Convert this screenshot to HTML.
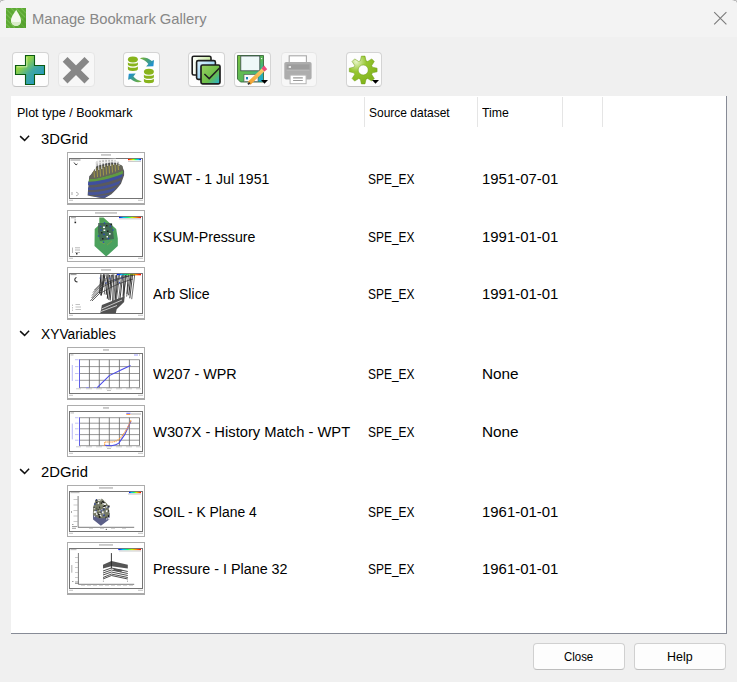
<!DOCTYPE html>
<html><head><meta charset="utf-8">
<style>
html,body{margin:0;padding:0}
body{width:737px;height:682px;background:#f0f0f0;position:relative;overflow:hidden;font-family:"Liberation Sans",sans-serif;color:#000}
.a{position:absolute}
.t{position:absolute;white-space:pre;transform-origin:0 0;line-height:15px;font-size:15.5px;color:#000}
.s{font-size:13px;line-height:13px}
#title{left:0;top:0;width:737px;height:37px;background:#f3f3f3}
.btn{position:absolute;top:52px;width:35px;height:33px;border:1px solid #d4d4d4;border-bottom-color:#c4c4c4;border-radius:4px;background:#fdfdfd}
.btn.dis{background:#f7f7f7;border-color:#e6e6e6}
.btn svg{position:absolute;left:-1px;top:-1px}
#panel{left:11px;top:96px;width:715px;height:537px;background:#fff;border-right:1px solid #878b96;border-bottom:1px solid #878b96}
.dv{position:absolute;top:97px;width:1px;height:30px;background:#e5e5e5}
.th{position:absolute;left:67px;width:78px;height:53px}
.pb{position:absolute;top:643px;width:90px;height:25px;border:1px solid #d0d0d0;border-bottom-color:#bdbdbd;border-radius:4px;background:#fdfdfd}
</style></head><body>
<div id="title" class="a">
  <svg class="a" style="left:6px;top:8px" width="20" height="20" viewBox="0 0 20 20">
    <rect width="20" height="20" fill="#5da933"/>
    <path d="M0 1L19 20M0 6L14 20M0 11L9 20M0 16L4 20M5 0L20 15M10 0L20 10M15 0L20 5" stroke="#8ccc68" stroke-width="1.1" opacity=".5"/><path d="M20 20V8C17 12 14 17 8 20Z" fill="#4f9a2a" opacity=".5"/>
    <path d="M10.2 1.8C8.5 5 5 9 5 12.5C5 15.8 7.3 17.8 10.2 17.8C13.1 17.8 15 15.8 15 12.5C15 9 11.8 5 10.2 1.8Z" fill="#f4f9ee"/>
    <path d="M5.3 13.5C6 16.5 8 17.8 10.2 17.8C12.5 17.8 14.5 16.5 14.9 13.5C13 14.3 8 14.3 5.3 13.5Z" fill="#d9ecc8"/>
  </svg>
  <div class="t" style="left:32px;top:11px;transform:scaleX(0.983);color:#878787;font-size:15px">Manage Bookmark Gallery</div>

<svg class="a" style="left:0;top:0" width="6" height="4" viewBox="0 0 6 4"><rect x="0" y="0" width="1" height="1" fill="#d0d0d0"/><rect x="1" y="0" width="2" height="1" fill="#b8b8b8"/><rect x="3" y="0" width="1" height="1" fill="#d6d6d6"/><rect x="4" y="0" width="1" height="1" fill="#e8e8e8"/><rect x="0" y="1" width="1" height="1" fill="#bcbcbc"/><rect x="0" y="2" width="1" height="1" fill="#e2e2e2"/></svg>
<svg class="a" style="left:731px;top:0" width="6" height="4" viewBox="0 0 6 4"><rect x="5" y="0" width="1" height="1" fill="#d0d0d0"/><rect x="3" y="0" width="2" height="1" fill="#b8b8b8"/><rect x="2" y="0" width="1" height="1" fill="#d6d6d6"/><rect x="1" y="0" width="1" height="1" fill="#e8e8e8"/><rect x="5" y="1" width="1" height="1" fill="#bcbcbc"/><rect x="5" y="2" width="1" height="1" fill="#e2e2e2"/></svg>
  <svg class="a" style="left:713px;top:11px" width="14" height="14" viewBox="0 0 14 14"><path d="M1.2 1.2L13.4 13.4M13.4 1.2L1.2 13.4" stroke="#7a7a7a" stroke-width="1.1"/></svg>
</div>
<div class="btn" style="left:12px">
<svg width="37" height="35" viewBox="0 0 37 35">
<defs><linearGradient id="gp" x1="0" y1="0" x2="1" y2="1"><stop offset="0" stop-color="#b8e440"/><stop offset="0.3" stop-color="#8cd04a"/><stop offset="0.55" stop-color="#40a8a0"/><stop offset="1" stop-color="#1690d0"/></linearGradient></defs>
<path d="M13.5 3.5H22.5V13.5H32.5V22.5H22.5V32.5H13.5V22.5H3.5V13.5H13.5Z" fill="url(#gp)" stroke="#0a5a12" stroke-width="1.1"/>
<path d="M14.8 5V14.8H5" fill="none" stroke="#e6f6c0" stroke-width="1" opacity=".7"/>
</svg></div>
<div class="btn dis" style="left:58px">
<svg width="37" height="35" viewBox="0 0 37 35">
<path d="M7.1 7.4L28.9 29M28.9 7.4L7.1 29" stroke="#878787" stroke-width="6.8"/>
</svg></div>
<div class="btn" style="left:123px">
<svg width="37" height="35" viewBox="0 0 37 35">
<defs><linearGradient id="ga1" x1="0" y1="0" x2="1" y2="0.6"><stop offset="0" stop-color="#84b830"/><stop offset="0.5" stop-color="#4aa070"/><stop offset="1" stop-color="#2090d0"/></linearGradient>
<linearGradient id="ga2" x1="1" y1="1" x2="0" y2="0.3"><stop offset="0" stop-color="#84b830"/><stop offset="0.5" stop-color="#4aa070"/><stop offset="1" stop-color="#2090d0"/></linearGradient>
</defs>
<g fill="#88b41c"><ellipse cx="9.9" cy="7.45" rx="5" ry="2.95"/><path d="M4.9 9.9A5 1.6 0 0 0 14.9 9.9V12.6A5 1.8 0 0 1 4.9 12.6Z"/><path d="M4.9 13.9A5 1.8 0 0 0 14.9 13.9V17A5 1.9 0 0 1 4.9 17Z"/></g><g fill="#88b41c" transform="translate(16 12.3)"><ellipse cx="9.9" cy="7.45" rx="5" ry="2.95"/><path d="M4.9 9.9A5 1.6 0 0 0 14.9 9.9V12.6A5 1.8 0 0 1 4.9 12.6Z"/><path d="M4.9 13.9A5 1.8 0 0 0 14.9 13.9V17A5 1.9 0 0 1 4.9 17Z"/></g>
<path d="M16.9 6.4C19.5 4.6 24.5 5.2 28.8 8.9L31 7.9L30.4 14.2L23.1 14.6L25.3 11.9C23.5 9.4 21 7.6 16.9 6.4Z" fill="url(#ga1)"/>
<path d="M5.8 21.8L12.7 21.5L10.4 24.5C12 26.8 15 28.5 18.9 29.3C15.5 31 11 30.2 7.7 27.1L5.1 27.7Z" fill="url(#ga2)"/>
</svg></div>
<div class="btn" style="left:188px">
<svg width="37" height="35" viewBox="0 0 37 35">
<defs><linearGradient id="gr1" x1="0" y1="0" x2="1" y2="0"><stop offset="0" stop-color="#fff"/><stop offset="1" stop-color="#c8eaa0"/></linearGradient>
<linearGradient id="gr2" x1="0" y1="0" x2="1" y2="1"><stop offset="0" stop-color="#e6f6ff"/><stop offset="1" stop-color="#6cc0ee"/></linearGradient>
<linearGradient id="gr3" x1="0" y1="0" x2="1" y2="1"><stop offset="0" stop-color="#9ad060"/><stop offset="0.6" stop-color="#6cbe48"/><stop offset="1" stop-color="#20b0e0"/></linearGradient></defs>
<rect x="4.2" y="4.2" width="18.8" height="18.8" rx="1.6" fill="url(#gr1)" stroke="#1e1e1e" stroke-width="1.6"/>
<rect x="8.6" y="8.6" width="18.8" height="18.8" rx="1.6" fill="url(#gr2)" stroke="#1e1e1e" stroke-width="1.6"/>
<rect x="13" y="13" width="19" height="18.8" rx="1.6" fill="url(#gr3)" stroke="#1e1e1e" stroke-width="1.7"/>
<path d="M16.4 22L21.2 26.6L31.5 16" fill="none" stroke="#222" stroke-width="1.5"/>
</svg></div>
<div class="btn" style="left:234px">
<svg width="37" height="35" viewBox="0 0 37 35">
<defs><linearGradient id="gf" x1="0" y1="0" x2="1" y2="1"><stop offset="0" stop-color="#7cc440"/><stop offset="0.55" stop-color="#58b858"/><stop offset="1" stop-color="#10a8e8"/></linearGradient>
<linearGradient id="gpen" x1="0" y1="1" x2="1" y2="0"><stop offset="0" stop-color="#f0a030"/><stop offset="1" stop-color="#f8d070"/></linearGradient></defs>
<path d="M3.5 3.5H29.5V30H6.5L3.5 27Z" fill="url(#gf)" stroke="#3a6a3a" stroke-width="0.9"/>
<rect x="6.8" y="4" width="19" height="14.8" fill="#eef8f8" stroke="#3a4a4a" stroke-width="0.8"/>
<rect x="10" y="22.6" width="14" height="7" fill="#fafafa" stroke="#555" stroke-width="0.6"/>
<rect x="12" y="25" width="2" height="2.4" fill="#1a80b0"/>
<circle cx="27.6" cy="6.6" r="0.7" fill="#fff"/>
<path d="M15.2 31.2L30.4 16.6" stroke="url(#gpen)" stroke-width="4"/>
<path d="M14 32.4L15.8 30.6" stroke="#333" stroke-width="2"/>
<path d="M30.2 13.6L33.2 17.2L30.4 19.6L27.6 16.6Z" fill="#ee4a7a"/>
<path d="M27 28H34L30.5 31.8Z" fill="#000"/>
</svg></div>
<div class="btn dis" style="left:281px;width:34px">
<svg width="36" height="35" viewBox="0 0 36 35">
<rect x="8.2" y="3.8" width="17.2" height="7.4" fill="#fff" stroke="#a8a8a8" stroke-width="1.1"/>
<rect x="3.3" y="10" width="27.3" height="17.6" rx="1.8" fill="#adadad"/>
<rect x="5.6" y="12.4" width="22.9" height="5.2" fill="#9d9d9d"/>
<path d="M5.6 18.2H28.5" stroke="#c4c4c4" stroke-width="0.6"/>
<rect x="7.7" y="14.1" width="2.3" height="1.8" fill="#efefef"/>
<rect x="9.1" y="23.1" width="16" height="8.6" fill="#fff" stroke="#b4b4b4" stroke-width="1"/>
<path d="M12.1 25.9H21.8M12.1 28.5H21.8" stroke="#9a9a9a" stroke-width="1.1"/>
</svg></div>
<div class="btn" style="left:346px;width:34px">
<svg width="36" height="35" viewBox="0 0 36 35">
<defs><radialGradient id="gg" cx="0.25" cy="0.2" r="0.8"><stop offset="0" stop-color="#e8f6c8"/><stop offset="0.45" stop-color="#96c630"/><stop offset="1" stop-color="#82b41c"/></radialGradient></defs>
<g transform="translate(17.2 18)">
<path id="gear" fill="url(#gg)" stroke="#6a9a10" stroke-width="0.5" fill-rule="evenodd" d="M-2.84 -9.17L-1.81 -13.88L1.81 -13.88L2.84 -9.17A9.6 9.6 0 0 1 4.48 -8.49L8.53 -11.10L11.10 -8.53L8.49 -4.48A9.6 9.6 0 0 1 9.17 -2.84L13.88 -1.81L13.88 1.81L9.17 2.84A9.6 9.6 0 0 1 8.49 4.48L11.10 8.53L8.53 11.10L4.48 8.49A9.6 9.6 0 0 1 2.84 9.17L1.81 13.88L-1.81 13.88L-2.84 9.17A9.6 9.6 0 0 1 -4.48 8.49L-8.53 11.10L-11.10 8.53L-8.49 4.48A9.6 9.6 0 0 1 -9.17 2.84L-13.88 1.81L-13.88 -1.81L-9.17 -2.84A9.6 9.6 0 0 1 -8.49 -4.48L-11.10 -8.53L-8.53 -11.10L-4.48 -8.49A9.6 9.6 0 0 1 -2.84 -9.17Z M5.0 0A5.0 5.0 0 1 0 -5.0 0A5.0 5.0 0 1 0 5.0 0Z"/>
</g>
<path d="M26 28H33L29.5 31.8Z" fill="#000"/>
</svg></div>

<div id="panel" class="a"></div>
<div class="dv" style="left:364px"></div>
<div class="dv" style="left:477px"></div>
<div class="dv" style="left:562px"></div>
<div class="dv" style="left:602px"></div>
<div class="t s" style="left:17px;top:106px;transform:scaleX(0.963);">Plot type / Bookmark</div>

<div class="t s" style="left:369px;top:106px;transform:scaleX(0.922);">Source dataset</div>

<div class="t s" style="left:482px;top:106px;transform:scaleX(0.944);">Time</div>

<svg class="a" style="left:18px;top:134px" width="13" height="8" viewBox="0 0 13 8"><path d="M2.1 2.1L6.6 6.4L11.1 1.8" fill="none" stroke="#111" stroke-width="1.5"/></svg>
<div class="t" style="left:41px;top:131px;transform:scaleX(0.955);">3DGrid</div>
<svg class="th" style="top:152px;height:53px" width="78" height="53" viewBox="0 0 78 53"><rect x="0.5" y="0.5" width="77" height="51" fill="#fff" stroke="#adadad"/><rect x="0" y="51" width="78" height="2" fill="#a9a9a9"/><rect x="34.0" y="2.4" width="10" height="1.1" fill="#a4a4a4"/><rect x="2.5" y="6.5" width="73" height="40" fill="#fff" stroke="#747474" stroke-width="1"/><rect x="2" y="47.8" width="4" height="0.9" fill="#bbb"/><rect x="71" y="47.8" width="5" height="0.9" fill="#bbb"/><defs><linearGradient id="g616.9r"><stop offset="0.00" stop-color="#ff0000"/><stop offset="0.20" stop-color="#ff8000"/><stop offset="0.40" stop-color="#c0ff00"/><stop offset="0.60" stop-color="#00ff80"/><stop offset="0.80" stop-color="#00c0ff"/><stop offset="1.00" stop-color="#0000ff"/></linearGradient></defs><rect x="61" y="6.9" width="13" height="1.3" fill="url(#g616.9r)"/><rect x="3.5" y="7.6" width="10" height="0.8" fill="#777"/><path d="M7 10.5L9 13L10.5 11.8" fill="none" stroke="#444" stroke-width="1"/><rect x="61" y="9" width="13" height="0.6" fill="#aaa"/><path d="M22.2 24.3L20.6 43.4L25.4 44.4L37 46.4L44.4 42.3L49.7 37L54 31.7L57.1 23.3L57.1 19L55 13.8L50.8 11.6L44 10L30 14L24.3 22.2Z" fill="#5a5a5e"/><path d="M21.2 29.5C30 29.5 42 27 55.5 21.5L55 25C42 30.5 30 33 21 33.3Z" fill="#3f4f9e"/><path d="M21 35.5C30 36 42 33.5 54 28.5L52 32C42 36.5 30 38.3 21 38.1Z" fill="#44529a"/><path d="M21 40C30 40.8 40 38.8 49.5 35L46.5 39C39 42 30 43.5 21.5 43Z" fill="#46549a"/><path d="M26 44.5L37 46L43 42.8L35 43.5Z" fill="#4a5590"/><path d="M22.5 27C30 27 42 24 56 18.5L55.8 21.8C42 27.2 30 29.7 21.5 29.8Z" fill="#5f9a42"/><path d="M24.3 22.2L30 14L50.8 11.6L55.5 14L56 18.5C42 24 30 27 22.5 27Z" fill="#66665a"/><path d="M27 19L27.5 25.5M30 16L30.5 25M33 15L33.5 24.5M36 14L36.5 23.5M39 13L39.5 22.5M42 13L42.5 21.5M45 12L45.5 20.5M48 12L48.5 19.5M51 12.5L51.5 18" stroke="#a89e46" stroke-width="0.9"/><path d="M28.5 10L28.5 19M31.5 9L31.8 18M34.5 8L34.8 17M37.5 7.5L37.7 15M40.5 7L40.7 14M43.5 7.5L43.7 14M46.5 8L46.7 13M49.5 9L49.7 13M52 10L52 14" stroke="#f4f4f4" stroke-width="0.8"/><path d="M30 9.5L30.2 18M33 8.5L33.2 17M36 7.8L36.2 16M39 7.2L39.2 15M42 7.2L42.2 14M45 7.6L45.2 13M48 8.4L48.2 13M51 9.5L51 13.5" stroke="#333" stroke-width="0.6"/><path d="M28 11L52 9.5M30 8L49 7" stroke="#eee" stroke-width="0.9"/><path d="M5 40L5 43M9 40.5A1.6 1.6 0 1 1 9 43.5" stroke="#888" stroke-width="0.7" fill="none"/></svg>
<div class="t" style="left:152.5px;top:171px;transform:scaleX(0.908);">SWAT - 1 Jul 1951</div>
<div class="t" style="left:368px;top:171px;transform:scaleX(0.771);">SPE_EX</div>
<div class="t" style="left:482px;top:171px;transform:scaleX(0.962);">1951-07-01</div>
<svg class="th" style="top:210px;height:52px" width="78" height="52" viewBox="0 0 78 52"><rect x="0.5" y="0.5" width="77" height="51" fill="#fff" stroke="#adadad"/><rect x="0" y="51" width="78" height="1" fill="#adadad"/><rect x="28.0" y="2.4" width="22" height="1.1" fill="#a4a4a4"/><rect x="2.5" y="6.5" width="73" height="40" fill="#fff" stroke="#747474" stroke-width="1"/><rect x="2" y="47.8" width="4" height="0.9" fill="#bbb"/><rect x="71" y="47.8" width="5" height="0.9" fill="#bbb"/><defs><linearGradient id="g526.9"><stop offset="0.00" stop-color="#0000ff"/><stop offset="0.20" stop-color="#00c0ff"/><stop offset="0.40" stop-color="#00ff80"/><stop offset="0.60" stop-color="#c0ff00"/><stop offset="0.80" stop-color="#ff8000"/><stop offset="1.00" stop-color="#ff0000"/></linearGradient></defs><rect x="52" y="6.9" width="22" height="1.1" fill="url(#g526.9)"/><rect x="52" y="8.6" width="22" height="0.6" fill="#999"/><rect x="4" y="7.4" width="5" height="0.8" fill="#888"/><rect x="7.5" y="11.6" width="1.6" height="1.6" fill="#222"/><rect x="7.6" y="9.3" width="1" height="1.2" fill="#888"/><defs><linearGradient id="hx" x1="0" y1="0" x2="0.4" y2="1"><stop offset="0" stop-color="#52a456"/><stop offset="1" stop-color="#48a060"/></linearGradient></defs><path d="M32.3 7.4L36.5 7.4L49.2 19L50.8 28.6L50.8 36L39.2 46.6L27.5 36L27.7 19L32.3 14.8Z" fill="url(#hx)"/><path d="M31 13L45 13L47 29L33 31L31 22Z" fill="#3f5a52" opacity=".75"/><g fill="#2a40c0"><circle cx="33.5" cy="16.5" r="0.8"/><circle cx="43.3" cy="16.4" r="0.8"/><circle cx="37.5" cy="13" r="0.8"/><circle cx="46" cy="20" r="0.8"/><circle cx="37" cy="24.4" r="0.8"/><circle cx="31.5" cy="26" r="0.8"/><circle cx="41.5" cy="28.5" r="0.8"/><circle cx="36.5" cy="32.2" r="0.8"/><circle cx="34" cy="20" r="0.8"/></g><g fill="#f8f8f8"><rect x="36" y="16.5" width="2" height="1.6"/><rect x="36.5" y="19.5" width="1.8" height="1.5"/><rect x="42" y="23" width="1.6" height="1.6"/><rect x="39.5" y="26" width="1.5" height="1.5"/></g><g fill="#222"><rect x="39" y="15" width="1.5" height="1.5"/><rect x="34" y="22" width="1.5" height="1.5"/><rect x="40" y="20.5" width="1.5" height="1.5"/><rect x="35" y="28" width="1.5" height="1.5"/><rect x="43.5" y="14" width="1.5" height="1.2"/></g><path d="M33 32L38 34M40 35L45 31" stroke="#a0a040" stroke-width="0.8" opacity=".6"/><path d="M5.5 37.5L5.5 43M8 37.8L13 37.8M8 40L13 40M8 42.5L13 42.5" stroke="#888" stroke-width="0.6"/><rect x="9" y="43" width="1.5" height="1.5" fill="#333"/></svg>
<div class="t" style="left:152.5px;top:229px;transform:scaleX(0.915);">KSUM-Pressure</div>
<div class="t" style="left:368px;top:229px;transform:scaleX(0.771);">SPE_EX</div>
<div class="t" style="left:482px;top:229px;transform:scaleX(0.962);">1991-01-01</div>
<svg class="th" style="top:267px;height:53px" width="78" height="53" viewBox="0 0 78 53"><rect x="0.5" y="0.5" width="77" height="51" fill="#fff" stroke="#adadad"/><rect x="0" y="51" width="78" height="2" fill="#a9a9a9"/><rect x="34.0" y="2.4" width="10" height="1.1" fill="#a4a4a4"/><rect x="2.5" y="6.5" width="73" height="40" fill="#fff" stroke="#747474" stroke-width="1"/><rect x="2" y="47.8" width="4" height="0.9" fill="#bbb"/><rect x="71" y="47.8" width="5" height="0.9" fill="#bbb"/><defs><linearGradient id="g506.9"><stop offset="0.00" stop-color="#0000ff"/><stop offset="0.20" stop-color="#00c0ff"/><stop offset="0.40" stop-color="#00ff80"/><stop offset="0.60" stop-color="#c0ff00"/><stop offset="0.80" stop-color="#ff8000"/><stop offset="1.00" stop-color="#ff0000"/></linearGradient></defs><rect x="50" y="6.9" width="24" height="1.4" fill="url(#g506.9)"/><rect x="3.5" y="7.2" width="6" height="0.9" fill="#888"/><path d="M9.5 10.5A2.2 2.2 0 1 0 10.5 14.8" stroke="#333" stroke-width="1.1" fill="none"/><path d="M33.9 7.2L32.6 26.1" stroke="#2e2e2e" stroke-width="1.1"/><path d="M35.1 7.9L33.5 28.3" stroke="#2e2e2e" stroke-width="0.7"/><path d="M36.8 7.1L34.6 24.5" stroke="#2e2e2e" stroke-width="1.1"/><path d="M38.0 7.3L34.2 28.6" stroke="#2e2e2e" stroke-width="1.1"/><path d="M39.9 7.1L37.2 27.4" stroke="#2e2e2e" stroke-width="0.7"/><path d="M41.1 7.2L39.2 27.7" stroke="#2e2e2e" stroke-width="1.1"/><path d="M42.4 7.9L40.3 31.8" stroke="#2e2e2e" stroke-width="1.1"/><path d="M44.3 7.8L41.8 32.9" stroke="#2e2e2e" stroke-width="1.1"/><path d="M45.5 7.5L43.2 33.4" stroke="#2e2e2e" stroke-width="0.9"/><path d="M46.8 7.3L45.6 35.1" stroke="#2e2e2e" stroke-width="0.9"/><path d="M48.5 8.3L46.7 35.2" stroke="#2e2e2e" stroke-width="0.7"/><path d="M49.6 7.6L48.2 35.5" stroke="#2e2e2e" stroke-width="0.9"/><path d="M51.3 8.4L48.7 31.4" stroke="#2e2e2e" stroke-width="0.9"/><path d="M52.7 7.5L49.3 33.5" stroke="#2e2e2e" stroke-width="0.7"/><path d="M54.6 8.4L51.6 32.6" stroke="#2e2e2e" stroke-width="0.7"/><path d="M55.9 7.5L52.9 32.5" stroke="#2e2e2e" stroke-width="0.9"/><path d="M57.0 7.6L56.0 32.3" stroke="#2e2e2e" stroke-width="0.9"/><path d="M58.5 7.9L56.9 30.2" stroke="#2e2e2e" stroke-width="0.9"/><path d="M59.8 7.4L56.2 28.7" stroke="#2e2e2e" stroke-width="0.7"/><path d="M61.3 7.6L59.9 26.9" stroke="#2e2e2e" stroke-width="0.9"/><path d="M63.3 7.4L59.6 29.6" stroke="#2e2e2e" stroke-width="0.7"/><path d="M64.2 7.3L61.7 28.3" stroke="#2e2e2e" stroke-width="1.1"/><path d="M65.6 7.4L62.8 31.3" stroke="#2e2e2e" stroke-width="0.9"/><path d="M67.7 8.0L64.7 32.2" stroke="#2e2e2e" stroke-width="0.7"/><path d="M23.3 33.9L36 21" stroke="#3a3a3a" stroke-width="0.8"/><path d="M24.5 31L37 18.5" stroke="#3a3a3a" stroke-width="0.8"/><path d="M25 28.5L37.5 15.5" stroke="#3a3a3a" stroke-width="0.8"/><path d="M26 25.5L38.5 13" stroke="#3a3a3a" stroke-width="0.8"/><path d="M27.5 23L40 10.5" stroke="#3a3a3a" stroke-width="0.8"/><path d="M25 34L34 25" stroke="#3a3a3a" stroke-width="0.8"/><path d="M33 22C40 17 50 12 62 9M34 26C42 21 52 16 66 12M36 18C44 13 54 10 68 8" fill="none" stroke="#333" stroke-width="0.7"/><path d="M33.3 46.6L34.9 38.1L50.8 31.7L57.7 29.6L57.1 34.9L49.7 42.3L48.7 46.6Z" fill="#505050"/><path d="M34.5 42L55 33M34 44.5L50 38.5" stroke="#e6e6e6" stroke-width="0.8"/><g fill="#3a50c8"><circle cx="43" cy="11.5" r="0.7"/><circle cx="52.5" cy="15.5" r="0.7"/><circle cx="39" cy="16" r="0.7"/><circle cx="55" cy="11" r="0.7"/><circle cx="33" cy="11" r="0.6"/><circle cx="48" cy="13" r="0.6"/></g><path d="M5.5 37.5L5.5 39M8.5 37.5L13 37.5M5.5 40L5.5 41.5M8.5 40L14 40M5.5 42.5L5.5 44M8.5 42.5L14 42.5" stroke="#999" stroke-width="0.6"/></svg>
<div class="t" style="left:152.5px;top:286px;transform:scaleX(0.912);">Arb Slice</div>
<div class="t" style="left:368px;top:286px;transform:scaleX(0.771);">SPE_EX</div>
<div class="t" style="left:482px;top:286px;transform:scaleX(0.962);">1991-01-01</div>
<svg class="a" style="left:18px;top:329px" width="13" height="8" viewBox="0 0 13 8"><path d="M2.1 2.1L6.6 6.4L11.1 1.8" fill="none" stroke="#111" stroke-width="1.5"/></svg>
<div class="t" style="left:41px;top:326px;transform:scaleX(0.889);">XYVariables</div>
<svg class="th" style="top:347px;height:53px" width="78" height="53" viewBox="0 0 78 53"><rect x="0.5" y="0.5" width="77" height="51" fill="#fff" stroke="#adadad"/><rect x="0" y="51" width="78" height="2" fill="#a9a9a9"/><rect x="36.0" y="2.4" width="6" height="1.1" fill="#a4a4a4"/><rect x="2.5" y="6.5" width="73" height="40" fill="#fff" stroke="#747474" stroke-width="1"/><rect x="2" y="47.8" width="4" height="0.9" fill="#bbb"/><rect x="71" y="47.8" width="5" height="0.9" fill="#bbb"/><path d="M12.5 12.7L12.5 40.7" stroke="#5a5a5a" stroke-width="0.75"/><path d="M22.4 12.7L22.4 40.7" stroke="#5a5a5a" stroke-width="0.75"/><path d="M32.3 12.7L32.3 40.7" stroke="#5a5a5a" stroke-width="0.75"/><path d="M42.3 12.7L42.3 40.7" stroke="#5a5a5a" stroke-width="0.75"/><path d="M52.4 12.7L52.4 40.7" stroke="#5a5a5a" stroke-width="0.75"/><path d="M62.4 12.7L62.4 40.7" stroke="#5a5a5a" stroke-width="0.75"/><path d="M72.5 12.7L72.5 40.7" stroke="#5a5a5a" stroke-width="0.75"/><path d="M12.5 12.7L72.5 12.7" stroke="#6a6a6a" stroke-width="0.7"/><path d="M12.5 19.6L72.5 19.6" stroke="#6a6a6a" stroke-width="0.7"/><path d="M12.5 26.5L72.5 26.5" stroke="#6a6a6a" stroke-width="0.7"/><path d="M12.5 33.3L72.5 33.3" stroke="#6a6a6a" stroke-width="0.7"/><path d="M12.5 40.7L72.5 40.7" stroke="#6a6a6a" stroke-width="0.7"/><path d="M12.5 12.5L12.5 40.7" stroke="#5a5af0" stroke-width="0.9"/><path d="M5.3 18L5.3 34" stroke="#9a9af0" stroke-width="0.7"/><path d="M8 12.7L11.5 12.7M8 19.6L11.5 19.6M8 26.5L11.5 26.5M8 33.3L11.5 33.3" stroke="#9a9af0" stroke-width="0.6"/><path d="M30.2 40.7L42.3 28.6L52.4 23.8L63.5 18.5" fill="none" stroke="#4a4ae8" stroke-width="1.1"/><path d="M19 40.5L22 40.5M27 40.5L29 40.5" stroke="#88f" stroke-width="0.7"/><rect x="3.5" y="7.6" width="3" height="0.7" fill="#999"/><rect x="67" y="7.6" width="4" height="0.8" fill="#88f"/><rect x="72" y="7.6" width="1" height="0.8" fill="#999"/><path d="M9 41.8L14 41.8M19 41.8L25 41.8M29 41.8L35 41.8M39 41.8L45 41.8M49 41.8L55 41.8M59 41.8L65 41.8M69 41.8L74 41.8" stroke="#aaa" stroke-width="0.6"/><rect x="40" y="43.2" width="4" height="0.7" fill="#aaa"/></svg>
<div class="t" style="left:152.5px;top:366px;transform:scaleX(0.925);">W207 - WPR</div>
<div class="t" style="left:368px;top:366px;transform:scaleX(0.771);">SPE_EX</div>
<div class="t" style="left:482px;top:366px;transform:scaleX(0.988);">None</div>
<svg class="th" style="top:405px;height:52px" width="78" height="52" viewBox="0 0 78 52"><rect x="0.5" y="0.5" width="77" height="51" fill="#fff" stroke="#adadad"/><rect x="0" y="51" width="78" height="1" fill="#adadad"/><rect x="36.0" y="2.4" width="6" height="1.1" fill="#a4a4a4"/><rect x="2.5" y="6.5" width="73" height="40" fill="#fff" stroke="#747474" stroke-width="1"/><rect x="2" y="47.8" width="4" height="0.9" fill="#bbb"/><rect x="71" y="47.8" width="5" height="0.9" fill="#bbb"/><path d="M12.5 12.7L12.5 40.7" stroke="#5a5a5a" stroke-width="0.75"/><path d="M22.4 12.7L22.4 40.7" stroke="#5a5a5a" stroke-width="0.75"/><path d="M32.3 12.7L32.3 40.7" stroke="#5a5a5a" stroke-width="0.75"/><path d="M42.3 12.7L42.3 40.7" stroke="#5a5a5a" stroke-width="0.75"/><path d="M52.4 12.7L52.4 40.7" stroke="#5a5a5a" stroke-width="0.75"/><path d="M62.4 12.7L62.4 40.7" stroke="#5a5a5a" stroke-width="0.75"/><path d="M72.5 12.7L72.5 40.7" stroke="#5a5a5a" stroke-width="0.75"/><path d="M12.5 12.7L72.5 12.7" stroke="#6a6a6a" stroke-width="0.7"/><path d="M12.5 18.2L72.5 18.2" stroke="#6a6a6a" stroke-width="0.7"/><path d="M12.5 23.8L72.5 23.8" stroke="#6a6a6a" stroke-width="0.7"/><path d="M12.5 29.6L72.5 29.6" stroke="#6a6a6a" stroke-width="0.7"/><path d="M12.5 35.2L72.5 35.2" stroke="#6a6a6a" stroke-width="0.7"/><path d="M12.5 40.7L72.5 40.7" stroke="#6a6a6a" stroke-width="0.7"/><path d="M12.5 12.5L12.5 40.7" stroke="#5a5af0" stroke-width="0.9"/><path d="M5.3 18.5L5.3 34.4" stroke="#9a9af0" stroke-width="0.7"/><path d="M8 12.7L11.5 12.7M8 18.2L11.5 18.2M8 23.8L11.5 23.8M8 29.6L11.5 29.6M8 35.2L11.5 35.2" stroke="#9a9af0" stroke-width="0.6"/><path d="M37.6 40.2L44.4 40.7C47 40.3 50 39.5 51.9 38.1C54 35 56 32 57.7 29.6C60 25 62 20 64 15.9" fill="none" stroke="#4a4ae8" stroke-width="1.1"/><path d="M37.6 40.7L37.6 37L45.5 37C48 36.5 50 35.8 51.9 34.4C54 32.5 56 30 57.7 27.5C60 24 62 20 64 15.3" fill="none" stroke="#ff9a30" stroke-width="1.1" stroke-dasharray="1.4 0.7"/><path d="M59.3 8.3L63.5 8.3" stroke="#55f" stroke-width="0.9"/><path d="M59.3 9.5L63.5 9.5" stroke="#f93" stroke-width="0.9"/><rect x="64" y="8" width="10" height="0.6" fill="#bbb"/><rect x="64" y="9.3" width="10" height="0.6" fill="#bbb"/><rect x="3.5" y="7.6" width="3.5" height="0.7" fill="#999"/><path d="M9 41.8L14 41.8M19 41.8L25 41.8M29 41.8L35 41.8M39 41.8L45 41.8M49 41.8L55 41.8M59 41.8L65 41.8M69 41.8L74 41.8" stroke="#aaa" stroke-width="0.6"/><rect x="40" y="43.2" width="4" height="0.7" fill="#aaa"/></svg>
<div class="t" style="left:152.5px;top:424px;transform:scaleX(0.950);">W307X - History Match - WPT</div>
<div class="t" style="left:368px;top:424px;transform:scaleX(0.771);">SPE_EX</div>
<div class="t" style="left:482px;top:424px;transform:scaleX(0.988);">None</div>
<svg class="a" style="left:18px;top:467px" width="13" height="8" viewBox="0 0 13 8"><path d="M2.1 2.1L6.6 6.4L11.1 1.8" fill="none" stroke="#111" stroke-width="1.5"/></svg>
<div class="t" style="left:41px;top:464px;transform:scaleX(0.955);">2DGrid</div>
<svg class="th" style="top:485px;height:52px" width="78" height="52" viewBox="0 0 78 52"><rect x="0.5" y="0.5" width="77" height="51" fill="#fff" stroke="#adadad"/><rect x="0" y="51" width="78" height="1" fill="#adadad"/><rect x="32.0" y="2.4" width="14" height="1.1" fill="#a4a4a4"/><rect x="2.5" y="6.5" width="73" height="40" fill="#fff" stroke="#747474" stroke-width="1"/><rect x="2" y="47.8" width="4" height="0.9" fill="#bbb"/><rect x="71" y="47.8" width="5" height="0.9" fill="#bbb"/><defs><linearGradient id="g626.9"><stop offset="0.00" stop-color="#0000ff"/><stop offset="0.20" stop-color="#00c0ff"/><stop offset="0.40" stop-color="#00ff80"/><stop offset="0.60" stop-color="#c0ff00"/><stop offset="0.80" stop-color="#ff8000"/><stop offset="1.00" stop-color="#ff0000"/></linearGradient></defs><rect x="62" y="6.9" width="12" height="1.2" fill="url(#g626.9)"/><rect x="61" y="8.7" width="13" height="0.6" fill="#999"/><rect x="3.5" y="7.4" width="9" height="0.7" fill="#999"/><path d="M11.1 11L11.1 42.3L67.2 42.3" fill="none" stroke="#444" stroke-width="0.7"/><path d="M6.5 14.5L11 14.5M6.5 20L11 20M6.5 25.5L11 25.5M6.5 31L11 31M6.5 36.5L11 36.5M22 43.3L26 43.3M33 43.3L37 43.3M44 43.3L48 43.3M55 43.3L59 43.3" stroke="#aaa" stroke-width="0.6"/><path d="M4.5 26L4.5 28" stroke="#888" stroke-width="0.7"/><path d="M5 39.5L6.5 39.5M5 41.5L10 41.5M5 43.3L9 43.3" stroke="#777" stroke-width="0.7"/><path d="M25.9 27.5L26.1 34.4L33.9 40.7L42.9 33.9L42.6 27.5L39 31.5L32 32Z" fill="#5b5f88"/><path d="M26 22.5L27.5 18L28.6 14.8L31 14.5L34.9 13.8L37 15.5L40.2 19L41.5 21L42.3 27.5L42.6 30L40 33L32 33.5L26 30Z" fill="#767a66"/><rect x="33.3" y="24.6" width="1.4" height="1.4" fill="#3a4a88"/><rect x="35.3" y="17.5" width="1.4" height="1.5" fill="#f6f6f6"/><rect x="29.3" y="22.5" width="0.9" height="1.8" fill="#1c1c1c"/><rect x="36.9" y="14.8" width="2.0" height="1.6" fill="#f6f6f6"/><rect x="35.7" y="17.0" width="1.8" height="0.9" fill="#1c1c1c"/><rect x="27.0" y="30.7" width="0.8" height="1.4" fill="#f6f6f6"/><rect x="33.1" y="30.0" width="1.1" height="1.2" fill="#f6f6f6"/><rect x="36.3" y="21.7" width="2.0" height="1.8" fill="#f6f6f6"/><rect x="37.1" y="20.0" width="1.4" height="0.8" fill="#1c1c1c"/><rect x="34.9" y="16.1" width="1.8" height="1.3" fill="#1c1c1c"/><rect x="40.9" y="30.1" width="1.1" height="1.9" fill="#1c1c1c"/><rect x="27.3" y="21.1" width="1.3" height="0.9" fill="#8a9070"/><rect x="35.9" y="28.8" width="1.2" height="1.2" fill="#f6f6f6"/><rect x="26.7" y="21.8" width="1.0" height="1.6" fill="#1c1c1c"/><rect x="26.7" y="22.8" width="1.0" height="1.5" fill="#f6f6f6"/><rect x="33.2" y="17.6" width="1.7" height="1.3" fill="#8a9070"/><rect x="32.3" y="21.5" width="0.8" height="1.8" fill="#1c1c1c"/><rect x="41.1" y="25.3" width="1.1" height="1.3" fill="#1c1c1c"/><rect x="39.3" y="26.2" width="0.9" height="1.0" fill="#1c1c1c"/><rect x="33.1" y="14.2" width="1.2" height="1.2" fill="#f6f6f6"/><rect x="35.2" y="18.6" width="1.2" height="1.5" fill="#f6f6f6"/><rect x="28.4" y="25.2" width="1.5" height="1.8" fill="#3a4a88"/><rect x="29.2" y="16.9" width="1.8" height="1.1" fill="#1c1c1c"/><rect x="29.3" y="28.0" width="1.0" height="1.9" fill="#f6f6f6"/><rect x="39.7" y="25.5" width="0.9" height="0.9" fill="#f6f6f6"/><rect x="34.2" y="18.8" width="1.6" height="1.1" fill="#8a9070"/><rect x="38.9" y="25.3" width="1.4" height="1.9" fill="#f6f6f6"/><rect x="33.7" y="26.4" width="1.5" height="1.1" fill="#f6f6f6"/><rect x="26.7" y="19.1" width="1.1" height="0.9" fill="#f6f6f6"/><rect x="30.7" y="24.1" width="0.9" height="1.0" fill="#1c1c1c"/><rect x="33.3" y="20.3" width="1.6" height="1.5" fill="#8a9070"/><rect x="28.6" y="14.7" width="1.4" height="1.2" fill="#1c1c1c"/><rect x="31.2" y="14.6" width="1.6" height="1.4" fill="#f6f6f6"/><rect x="37.5" y="20.1" width="0.9" height="1.5" fill="#1c1c1c"/><rect x="37.6" y="31.1" width="1.7" height="1.0" fill="#8a9070"/><rect x="41.0" y="20.5" width="1.6" height="1.9" fill="#1c1c1c"/><rect x="39.6" y="21.9" width="0.8" height="1.4" fill="#3a4a88"/><rect x="26.7" y="26.6" width="1.5" height="1.5" fill="#f6f6f6"/><rect x="27.7" y="26.1" width="1.9" height="1.7" fill="#f6f6f6"/><rect x="32.3" y="28.0" width="1.3" height="1.4" fill="#f6f6f6"/><rect x="34.6" y="23.9" width="0.8" height="1.5" fill="#f6f6f6"/><rect x="33.7" y="18.4" width="0.9" height="1.7" fill="#8a9070"/><rect x="36.4" y="23.2" width="1.2" height="1.0" fill="#1c1c1c"/><rect x="35.7" y="23.8" width="1.9" height="1.6" fill="#3a4a88"/><rect x="33.1" y="30.9" width="1.3" height="1.1" fill="#f6f6f6"/><rect x="36.0" y="29.3" width="1.9" height="1.9" fill="#3a4a88"/><rect x="32.3" y="25.1" width="1.1" height="1.0" fill="#f6f6f6"/><rect x="31.8" y="31.0" width="1.7" height="1.9" fill="#1c1c1c"/><rect x="30.7" y="17.2" width="1.4" height="1.9" fill="#f6f6f6"/><rect x="39.0" y="21.3" width="1.4" height="1.2" fill="#f6f6f6"/><rect x="39.1" y="32.7" width="1.2" height="1.8" fill="#f6f6f6"/><rect x="30.7" y="25.5" width="1.7" height="1.5" fill="#8a9070"/><rect x="31.1" y="29.0" width="1.6" height="1.3" fill="#1c1c1c"/><rect x="29.3" y="28.6" width="1.1" height="1.0" fill="#f6f6f6"/><rect x="27.2" y="26.0" width="0.9" height="1.4" fill="#f6f6f6"/><rect x="36.1" y="21.0" width="1.6" height="1.0" fill="#1c1c1c"/><rect x="33.6" y="17.4" width="1.7" height="1.4" fill="#1c1c1c"/><rect x="27.0" y="18.3" width="1.2" height="1.6" fill="#3a4a88"/><rect x="34.3" y="25.7" width="1.0" height="1.8" fill="#3a4a88"/><rect x="37.0" y="18.3" width="1.9" height="1.7" fill="#f6f6f6"/><rect x="28.4" y="22.6" width="1.9" height="0.8" fill="#8a9070"/><rect x="34.8" y="26.4" width="1.8" height="1.9" fill="#f6f6f6"/><rect x="33.5" y="26.4" width="0.9" height="1.8" fill="#1c1c1c"/><rect x="38.5" y="31.6" width="1.1" height="1.9" fill="#1c1c1c"/><rect x="41.2" y="32.6" width="2.0" height="1.9" fill="#f6f6f6"/><rect x="30.4" y="27.6" width="1.2" height="0.9" fill="#1c1c1c"/><g fill="#3a4a90"><rect x="29" y="14" width="1" height="1.6"/><rect x="28" y="18.5" width="1" height="1"/><rect x="40.5" y="21.5" width="1.2" height="1"/></g><circle cx="39.3" cy="44.3" r="0.6" fill="#333"/></svg>
<div class="t" style="left:152.5px;top:504px;transform:scaleX(0.896);">SOIL - K Plane 4</div>
<div class="t" style="left:368px;top:504px;transform:scaleX(0.771);">SPE_EX</div>
<div class="t" style="left:482px;top:504px;transform:scaleX(0.962);">1961-01-01</div>
<svg class="th" style="top:542px;height:53px" width="78" height="53" viewBox="0 0 78 53"><rect x="0.5" y="0.5" width="77" height="51" fill="#fff" stroke="#adadad"/><rect x="0" y="51" width="78" height="2" fill="#a9a9a9"/><rect x="32.0" y="2.4" width="14" height="1.1" fill="#a4a4a4"/><rect x="2.5" y="6.5" width="73" height="40" fill="#fff" stroke="#747474" stroke-width="1"/><rect x="2" y="47.8" width="4" height="0.9" fill="#bbb"/><rect x="71" y="47.8" width="5" height="0.9" fill="#bbb"/><defs><linearGradient id="g51.36.9"><stop offset="0.00" stop-color="#0000ff"/><stop offset="0.20" stop-color="#00c0ff"/><stop offset="0.40" stop-color="#00ff80"/><stop offset="0.60" stop-color="#c0ff00"/><stop offset="0.80" stop-color="#ff8000"/><stop offset="1.00" stop-color="#ff0000"/></linearGradient></defs><rect x="51.3" y="6.9" width="22.7" height="1.2" fill="url(#g51.36.9)"/><rect x="52" y="8.7" width="22" height="0.6" fill="#aaa"/><rect x="3.5" y="7.4" width="6" height="0.7" fill="#999"/><path d="M11.4 11L11.4 42.3L67.2 42.3" fill="none" stroke="#444" stroke-width="0.7"/><path d="M8 15.5L11 15.5M8 20.5L11 20.5M8 25.5L11 25.5M8 30.5L11 30.5M8 35.5L11 35.5M14 43.3L18 43.3M20 43.3L24 43.3M26 43.3L30 43.3M32 43.3L36 43.3M38 43.3L42 43.3M44 43.3L48 43.3M50 43.3L54 43.3M56 43.3L60 43.3M62 43.3L66 43.3" stroke="#aaa" stroke-width="0.6"/><path d="M4.8 23L4.8 30.7" stroke="#999" stroke-width="0.8"/><path d="M5 39.5L6.5 39.5M8 40L12 40M8 41.5L12 41.5" stroke="#777" stroke-width="0.7"/><path d="M36 22.8L44.4 19L60.8 22.8L60.8 26.5L44.4 24.3L36 26.5Z" fill="#555"/><path d="M36 29L44.4 26L60.8 29.5M36 31L44.4 28L60.8 31.5M36 33L44.4 30L60.8 33.5M36 35.5L44.4 32L60.8 35.5M36 37L44.4 33.5L60.8 37" fill="none" stroke="#3a3a3a" stroke-width="0.9"/><path d="M46 26.5L56 28L54 30L47 28.5Z" fill="#555"/><path d="M44.4 11.1L44.4 26.5" stroke="#222" stroke-width="0.9"/><path d="M36.4 38.5L36.4 40M60.5 38.5L60.5 40" stroke="#666" stroke-width="0.5"/></svg>
<div class="t" style="left:152.5px;top:561px;transform:scaleX(0.924);">Pressure - I Plane 32</div>
<div class="t" style="left:368px;top:561px;transform:scaleX(0.771);">SPE_EX</div>
<div class="t" style="left:482px;top:561px;transform:scaleX(0.962);">1961-01-01</div>

<div class="pb" style="left:533px"></div>
<div class="t s" style="left:564px;top:650px;transform:scaleX(0.879);">Close</div>

<div class="pb" style="left:634px"></div>
<div class="t s" style="left:667px;top:650px;transform:scaleX(0.957);">Help</div>

</body></html>
